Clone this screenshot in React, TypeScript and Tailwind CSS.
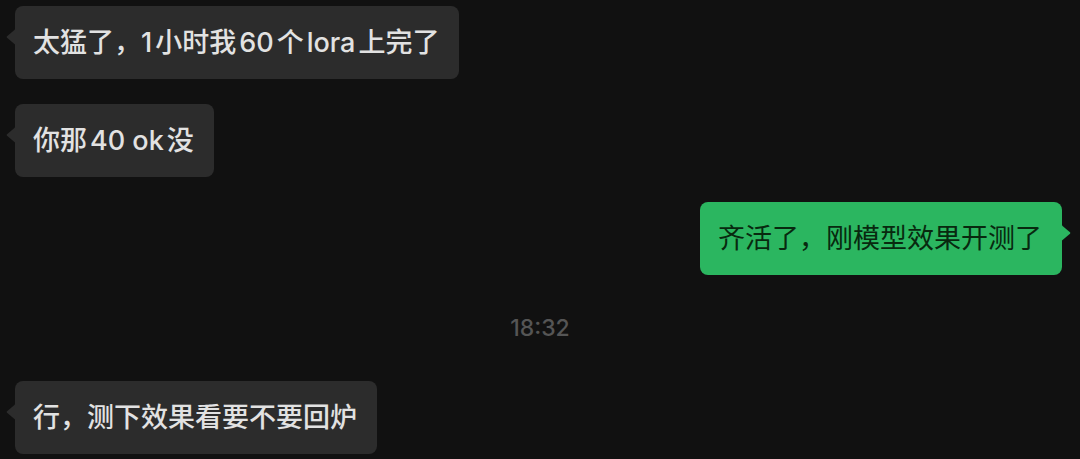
import { Fragment } from "react";

type Message = { side: "left" | "right"; text: string };

/* Latin words and numbers get a little air on the sides that touch Chinese characters. */
function MixedText({ text }: { text: string }) {
  const runs = text.match(/[\x20-\x7e]+|[^\x20-\x7e]+/g) ?? [];
  return (
    <>
      {runs.map((run, i) => {
        if (!/^[\x20-\x7e]/.test(run)) return <Fragment key={i}>{run}</Fragment>;
        const afterComma = i > 0 && runs[i - 1].endsWith("，");
        return (
          <span key={i} className={afterComma ? "mr-[3px]" : "mx-[3px]"}>
            {run}
          </span>
        );
      })}
    </>
  );
}

function Bubble({ side, text }: Message) {
  const mine = side === "right";
  return (
    <li className={mine ? "flex justify-end pr-[18px] pl-[15px]" : "flex justify-start pr-[18px] pl-[15px]"}>
      <div
        className={
          mine
            ? "relative rounded-lg bg-[#2bb660] py-4 pr-5 pl-[18px] font-normal text-[#08290f]"
            : "relative rounded-lg bg-[#2c2c2c] py-4 pr-5 pl-[18px] font-medium text-[#e2e2e2]"
        }
      >
        <svg
          aria-hidden="true"
          viewBox="0 0 10 16"
          className={
            mine
              ? "absolute top-[23px] -right-[9px] h-4 w-[10px] text-[#2bb660]"
              : "absolute top-[23px] -left-[9px] h-4 w-[10px] -scale-x-100 text-[#2c2c2c]"
          }
        >
          <path d="M0 0 L1 0.6 L9 7.3 Q9.8 8 9 8.7 L1 15.4 L0 16 Z" fill="currentColor" />
        </svg>
        <p className="text-[27px] leading-[41px]">
          <MixedText text={text} />
        </p>
      </div>
    </li>
  );
}

export default function App() {
  return (
    <main className="min-h-screen bg-[#111111] py-[6px] font-[Inter,'Noto_Sans_CJK_SC',sans-serif]">
      <ul className="flex flex-col gap-[25px]">
        <Bubble side="left" text="太猛了，1小时我60个lora上完了" />
        <Bubble side="left" text="你那40 ok没" />
        <Bubble side="right" text="齐活了，刚模型效果开测了" />
        <li className="py-[13px] text-center text-[23px] leading-[30px] font-medium text-[#555555]">
          <time dateTime="18:32">18:32</time>
        </li>
        <Bubble side="left" text="行，测下效果看要不要回炉" />
      </ul>
    </main>
  );
}
